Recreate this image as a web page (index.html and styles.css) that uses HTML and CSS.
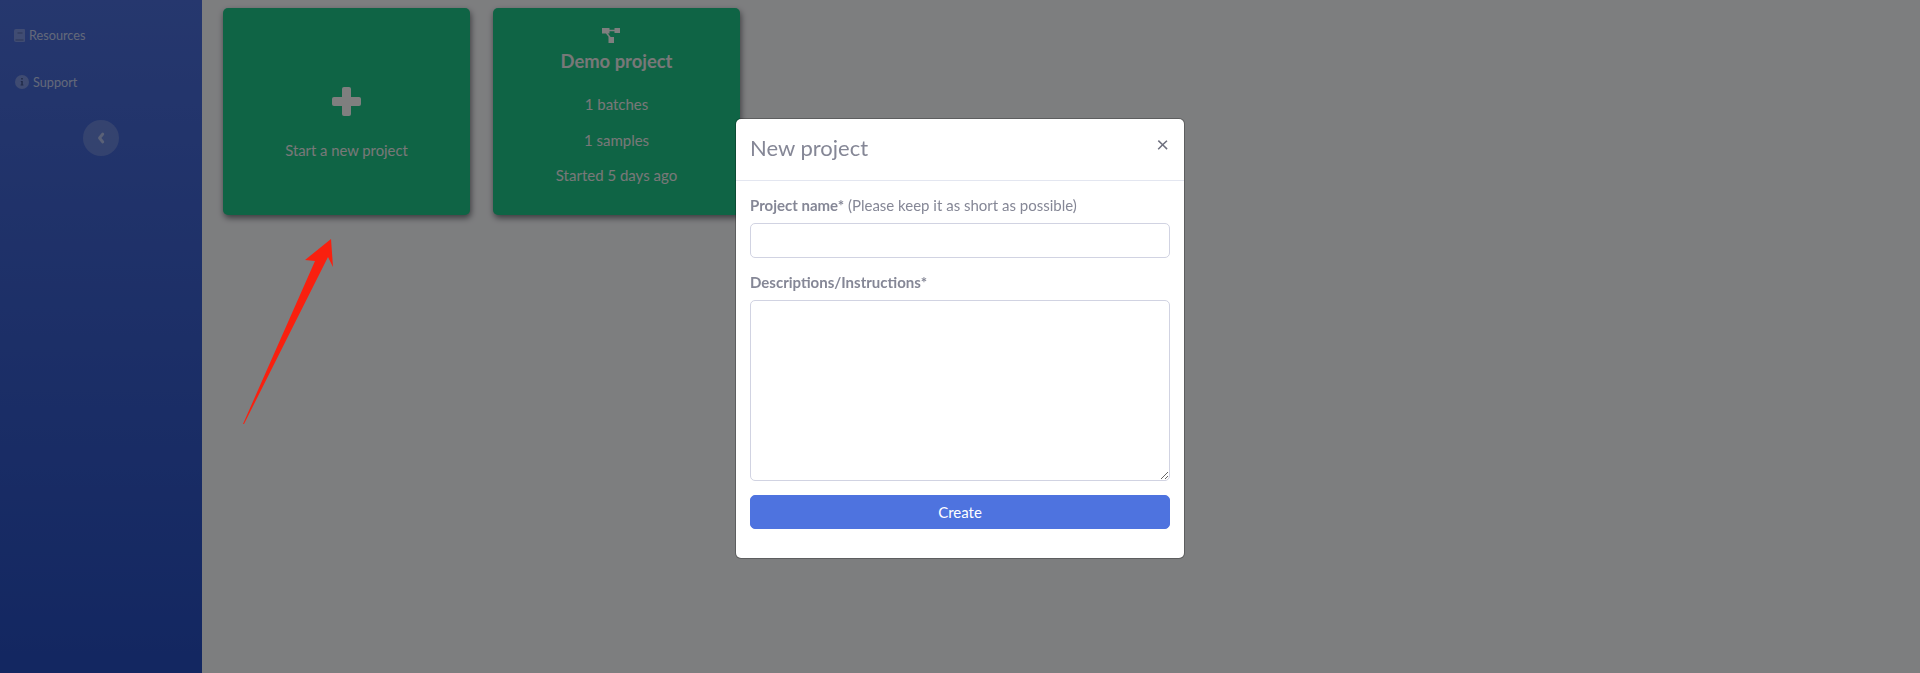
FILE: index.html
```html
<!DOCTYPE html>
<html lang="en">
<head>
<meta charset="utf-8">
<title>New project</title>
<link rel="stylesheet" href="styles.css">
</head>
<body>
<div class="page">
  <aside class="sidebar">
    <a class="nav-item nav-resources">
      <svg class="nav-icon book" viewBox="0 0 11 13"><path d="M2 0h8a1 1 0 0 1 1 1v11a1 1 0 0 1-1 1H2a2 2 0 0 1-2-2V2a2 2 0 0 1 2-2z" fill="#fff" fill-opacity=".3"/><path d="M3.500 4h5M1.500 11h8" stroke="#27396f" stroke-width="1" fill="none" opacity=".5"/></svg>
      <span>Resources</span>
    </a>
    <a class="nav-item nav-support">
      <svg class="nav-icon info" viewBox="0 0 14 14"><circle cx="7" cy="7" r="7" fill="#fff" fill-opacity=".3"/><path d="M6.200 3h1.600v1.600H6.200zM5.800 6h2v3.600h.6v1H5.600v-1h.7V7h-.5z" fill="#27396f" opacity=".7"/></svg>
      <span>Support</span>
    </a>
    <button class="toggle" type="button">
      <svg viewBox="0 0 8 12" class="chev"><path d="M5.800 2 2.500 6l3.300 4" fill="none" stroke="#fff" stroke-opacity=".5" stroke-width="2.800" stroke-linecap="round" stroke-linejoin="round"/></svg>
    </button>
  </aside>
  <main class="main">
    <section class="card card-new">
      <svg class="plus" viewBox="0 0 29 29"><rect x="10" y="0" width="9" height="29" rx="2" fill="#fff"/><rect x="0" y="10" width="29" height="9" rx="2" fill="#fff"/></svg>
      <p class="new-label">Start a new project</p>
    </section>
    <section class="card card-demo">
      <svg class="diagram" viewBox="0 0 18 15"><path d="M0 0h7.500v5.500H0zM12.500 0H18v5h-5.500zM6.500 9H12v6H6.500z" fill="#fff"/><path d="M6 2.500h8M4.500 5l4 5" stroke="#fff" stroke-width="1.500" fill="none"/></svg>
      <h2 class="demo-title">Demo project</h2>
      <p class="demo-line first">1 batches</p>
      <p class="demo-line">1 samples</p>
      <p class="demo-line">Started 5 days ago</p>
    </section>
  </main>
</div>
<div class="backdrop"></div>
<svg class="arrow" viewBox="0 0 110 200" width="110" height="200"><polygon points="13,195 85,32 75,31 101,10 103,38 98,28 14,195" fill="#f9200f"/></svg>
<div class="modal-layer">
  <div class="modal">
    <header class="modal-head">
      <h3 class="modal-title">New project</h3>
      <span class="close">×</span>
    </header>
    <form class="modal-body">
      <label class="field-label"><b>Project name*</b> (Please keep it as short as possible)</label>
      <input class="input" type="text">
      <label class="field-label second"><b>Descriptions/Instructions*</b></label>
      <textarea class="textarea"></textarea>
      <button class="create" type="button">Create</button>
    </form>
  </div>
</div>
</body>
</html>
```
FILE: styles.css
```css
* { box-sizing: border-box; }
html, body { margin: 0; height: 673px; overflow: hidden; }
body { font-family: "Lato", "Noto Sans", sans-serif; background: #fff; color: #858796; }
.page { display: flex; height: 673px; }
.sidebar {
  width: 202px; flex: none; display: flex; flex-direction: column; align-items: flex-start;
  padding-top: 27px; background-image: linear-gradient(180deg, #4c6fdc 0%, #264ec2 100%);
}
.nav-item { display: flex; align-items: center; font-size: 12.700px; line-height: 16px; color: rgba(255,255,255,.7); height: 16px; }
.nav-icon { display: block; flex: none; }
.nav-resources { margin-left: 14px; gap: 4px; }
.book { width: 11px; height: 13px; }
.nav-support { margin-left: 15px; margin-top: 31px; gap: 4px; }
.info { width: 14px; height: 14px; }
.toggle {
  width: 36px; height: 36px; margin: 30px 0 0 83px; border: 0; padding: 0; border-radius: 50%;
  background: rgba(255,255,255,.2); display: flex; align-items: center; justify-content: center;
}
.chev { width: 8px; height: 12px; }
.main { flex: 1; display: flex; align-items: flex-start; gap: 23px; padding: 8px 0 0 21px; background: #fbfcff; }
.card {
  width: 247px; height: 207px; border-radius: 5px; background: #1ec88b; color: #f0f0f0; flex: none;
  display: flex; flex-direction: column; align-items: center;
  box-shadow: 1px 3px 6px rgba(30,30,40,.6);
}
.plus { width: 29px; height: 29px; margin-top: 79px; display: block; }
.new-label { margin: 24px 0 0; font-size: 14.800px; line-height: 20px; }
.diagram { width: 18px; height: 15px; margin-top: 20px; margin-left: -11px; display: block; }
.demo-title { margin: 6px 0 0; font-size: 18.400px; line-height: 24px; font-weight: 700; }
.demo-line { margin: 15px 0 0; font-size: 15px; line-height: 20.500px; }
.demo-line.first { margin-top: 21px; }
.backdrop { position: fixed; inset: 0; background: rgba(0,0,0,.5); }
.arrow { position: absolute; left: 230px; top: 229px; }
.modal-layer { position: fixed; inset: 0; display: flex; justify-content: center; padding-top: 119px; }
.modal { width: 448px; height: 439px; background: #fff; border-radius: 5px; box-shadow: 0 0 0 1px rgba(0,0,0,.25); display: flex; flex-direction: column; }
.modal-head { height: 62px; flex: none; border-bottom: 1px solid #e3e6f0; display: flex; justify-content: space-between; padding: 14px 15px 0 14px; }
.modal-title { margin: 0; font-size: 22px; line-height: 30px; font-weight: 400; }
.close { font-size: 22px; line-height: 22px; color: #6e707e; }
.modal-body { display: flex; flex-direction: column; padding: 14px 14px 0 14px; }
.field-label { font-size: 15px; line-height: 20px; display: block; }
.field-label b { font-weight: 700; }
.second { margin-top: 14px; }
.input { height: 35px; margin-top: 8px; border: 1px solid #d1d3e2; border-radius: 5px; background: #fff; width: 100%; padding: 0; }
.textarea { height: 181px; margin-top: 8px; border: 1px solid #d1d3e2; border-radius: 5px; background: #fff; width: 100%; padding: 0; resize: vertical; display: block; }
.create { height: 34px; margin-top: 14px; border: 1px solid #4e73df; border-radius: 5px; background: #4e73df; color: #fff; font: inherit; font-size: 15px; width: 100%; padding: 0; }
```
